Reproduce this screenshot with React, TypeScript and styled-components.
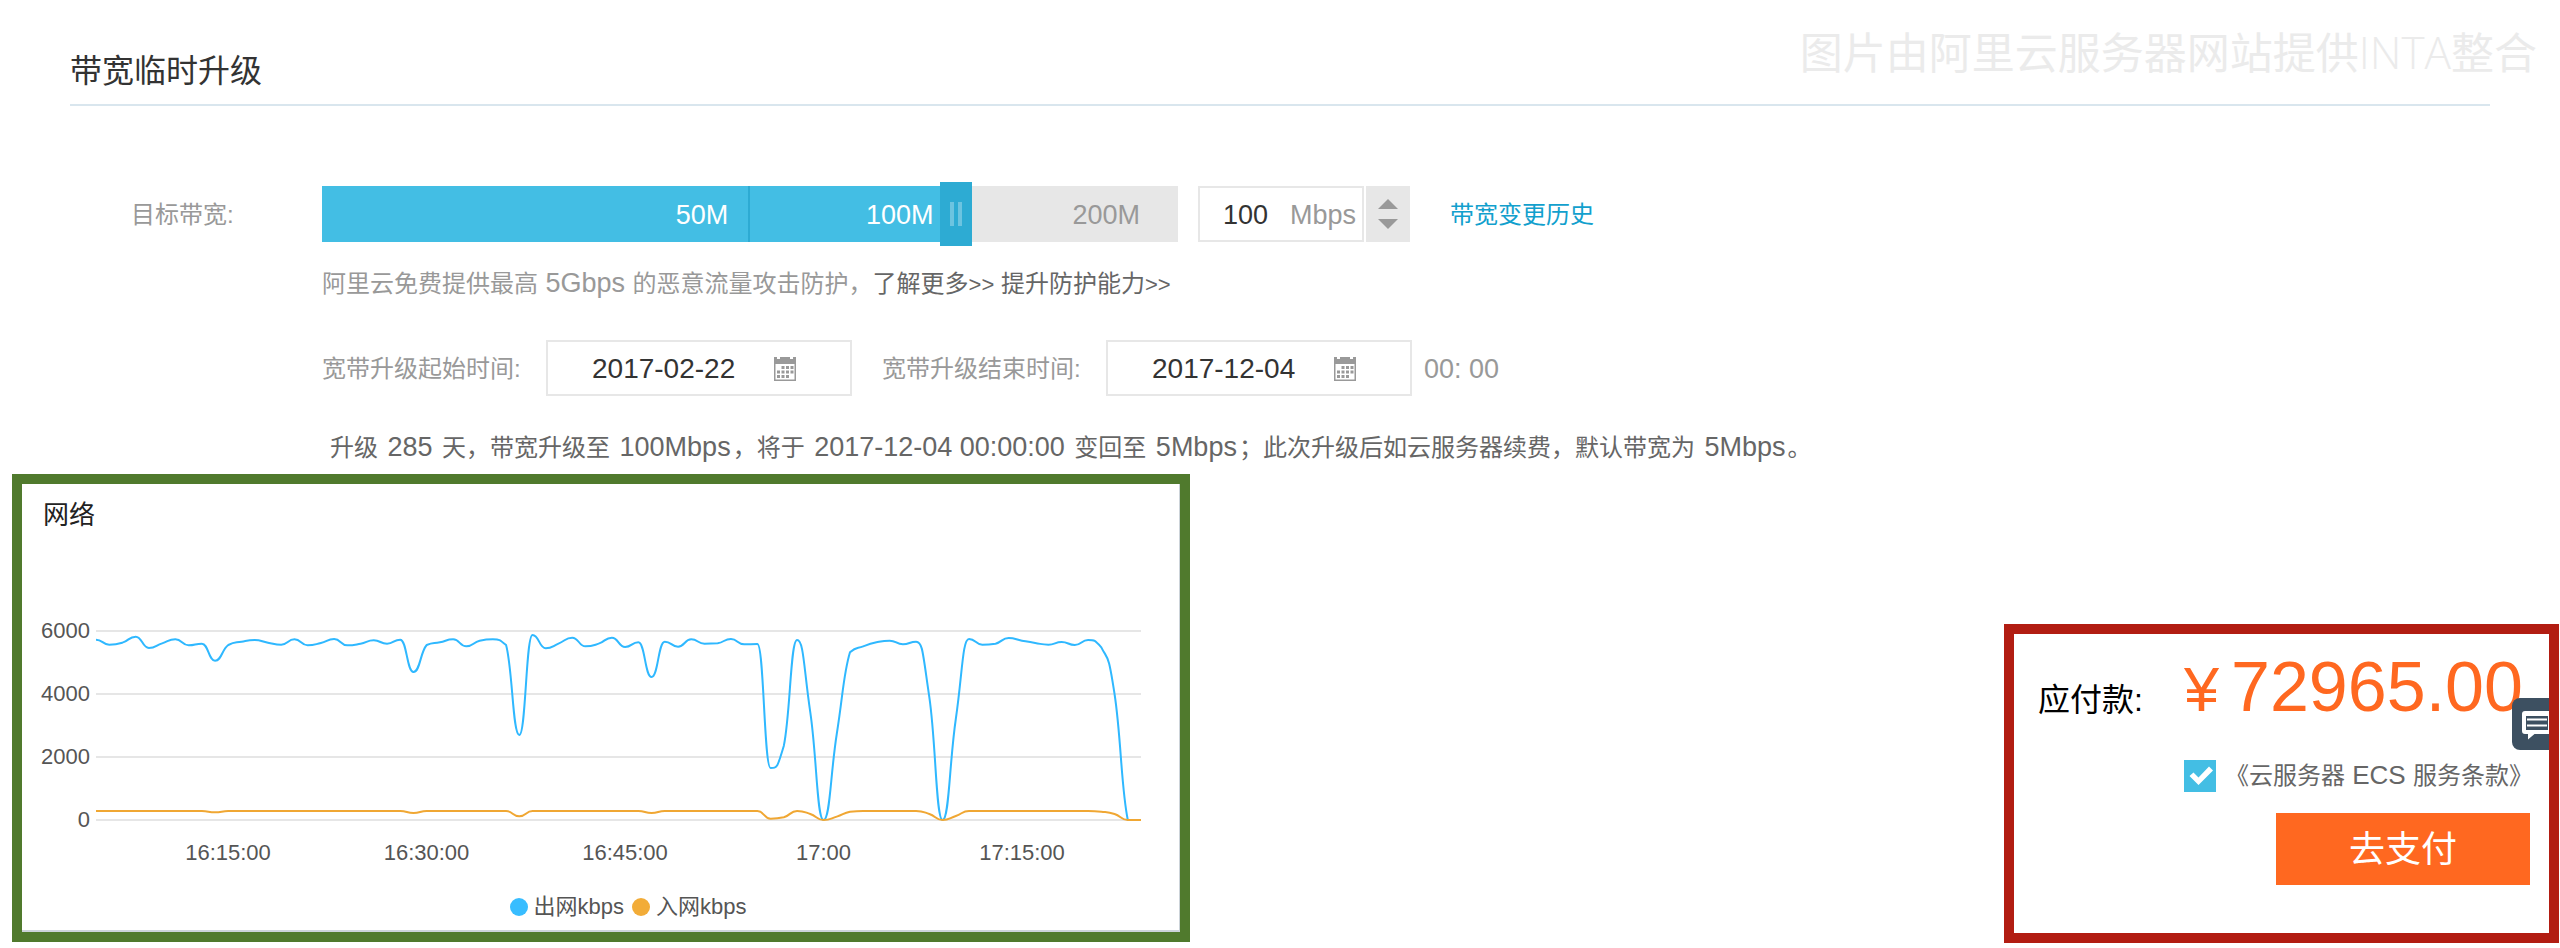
import React, { useState } from "react";
import styled, { createGlobalStyle } from "styled-components";

const Global = createGlobalStyle`
  *, *::before, *::after { box-sizing: border-box; }
  body {
    margin: 0;
    background: #fff;
    color: #999;
    font: 24px/36px "Liberation Sans", "Noto Sans CJK SC", sans-serif;
  }
  button, input { font: inherit; }
`;

const Page = styled.div`
  position: relative;
  padding-bottom: 6px;
`;

const Watermark = styled.div`
  position: absolute;
  top: 18px;
  right: 23px;
  color: #ebebeb;
  font-family: "Noto Sans CJK SC", sans-serif;
  font-size: 43px;
  line-height: 64px;
  white-space: nowrap;
  pointer-events: none;
`;

const WatermarkLatin = styled.span`
  font-family: "Open Sans", sans-serif;
  font-size: 44px;
  font-weight: 300;
  line-height: 1;
`;

const Header = styled.header`
  margin: 0 70px;
  padding: 47px 0 9px;
  border-bottom: 2px solid #d9e6ee;
`;

const Title = styled.h1`
  margin: 0;
  color: #333;
  font-size: 32px;
  font-weight: 400;
  line-height: 48px;
`;

const Form = styled.form`
  display: grid;
  grid-template-columns: 191px 1fr;
  padding: 80px 70px 0 131px;
  line-height: 58px;
`;

const FieldLabel = styled.label`
  white-space: nowrap;
`;

const Fields = styled.div`
  display: flex;
  flex-direction: column;
`;

const Row = styled.div`
  display: flex;
  align-items: center;
  height: 56px;
`;

const DateRow = styled(Row)`
  margin-top: 38px;
`;

const Latin = styled.span<{ $space?: number; $size?: number }>`
  font-size: ${(p) => p.$size ?? 27}px;
  line-height: 1;
  margin: 0 ${(p) => p.$space ?? 0}px;
`;

const Slider = styled.div`
  position: relative;
  display: flex;
  flex: 0 1 856px;
  height: 56px;
  margin-right: 20px;
`;

const Segment = styled.span<{ $share: number; $pad: number; $filled?: boolean; $divided?: boolean }>`
  flex: 0 0 ${(p) => p.$share}%;
  padding-right: ${(p) => p.$pad}px;
  border-left: ${(p) => (p.$divided ? "2px solid #2dabd3" : "0")};
  background: ${(p) => (p.$filled ? "#43bee4" : "#e7e7e7")};
  color: ${(p) => (p.$filled ? "#fff" : "#999")};
  font-size: 27px;
  text-align: right;
`;

const Handle = styled.span`
  position: absolute;
  top: -4px;
  left: 72.2%;
  display: flex;
  justify-content: center;
  align-items: center;
  gap: 4px;
  width: 32px;
  height: 64px;
  background: #2dabd3;

  &::before, &::after {
    content: "";
    width: 4px;
    height: 24px;
    background: #6cc4e0;
  }
`;

const Range = styled.input`
  position: absolute;
  inset: 0;
  width: 100%;
  height: 100%;
  margin: 0;
  opacity: 0;
  cursor: pointer;
`;

const AmountBox = styled.div`
  display: flex;
  align-items: center;
  width: 166px;
  height: 56px;
  padding: 2px 5px 0 23px;
  border: 2px solid #e7e7e7;
  font-size: 27px;
`;

const AmountInput = styled.input`
  width: 67px;
  padding: 0;
  border: 0;
  outline: 0;
  background: none;
  color: #333;
`;

const Stepper = styled.div`
  display: flex;
  flex-direction: column;
  width: 44px;
  height: 56px;
  margin: 0 40px 0 2px;
  background: #e7e7e7;
`;

const StepButton = styled.button<{ $down?: boolean }>`
  display: flex;
  flex: 1;
  justify-content: center;
  align-items: ${(p) => (p.$down ? "flex-start" : "flex-end")};
  padding: ${(p) => (p.$down ? "6px 0 0" : "0 0 4px")};
  border: 0;
  background: none;
`;

const HistoryLink = styled.a`
  padding-top: 2px;
  color: #12a0cd;
  text-decoration: none;
  white-space: nowrap;
`;

const Hint = styled.p`
  margin: 24px 0 0;
  line-height: 36px;

  a { color: #666; text-decoration: none; }
`;

const Arrows = styled.span`
  font-size: 22px;
  line-height: 1;
`;

const DateLabel = styled.label`
  flex: none;
  width: 224px;
  padding-top: 2px;
  white-space: nowrap;
`;

const DateBox = styled.div`
  display: flex;
  align-items: center;
  width: 306px;
  height: 56px;
  margin-right: 30px;
  padding: 0 52px 0 44px;
  border: 2px solid #e7e7e7;

  &:last-of-type { margin-right: 12px; }
`;

const DateInput = styled.input`
  width: 182px;
  padding: 2px 0 0;
  border: 0;
  outline: 0;
  background: none;
  color: #333;
  font-size: 28px;
  line-height: 36px;
`;

const IconButton = styled.button`
  display: flex;
  padding: 0;
  border: 0;
  background: none;
`;

const Time = styled.span`
  padding-top: 2px;
  font-size: 27px;
`;

const Summary = styled.p`
  margin: 34px 0 0;
  padding-left: 8px;
  color: #666;
  line-height: 36px;
`;

const Bottom = styled.div`
  display: flex;
  justify-content: space-between;
  align-items: flex-end;
  margin-top: 8px;
  padding: 0 1px 0 12px;
`;

const ChartPanel = styled.section`
  flex: 0 1 1178px;
  padding: 13px 0 7px;
  border: 10px solid #507a2d;
  box-shadow: inset -1px -2px 0 #ccd3d9;
`;

const ChartTitle = styled.h2`
  margin: 0 0 68px 21px;
  color: #222;
  font-size: 26px;
  font-weight: 400;
  line-height: 36px;
`;

const Plot = styled.svg`
  display: block;
  width: 100%;
  height: auto;
  fill: none;

  text { fill: #555; font-size: 22px; }
`;

const Legend = styled.ul`
  display: flex;
  justify-content: center;
  gap: 8px;
  margin: 18px 0 0;
  padding: 0 0 0 54px;
  list-style: none;
  color: #555;
  font-size: 22px;
  line-height: 36px;
`;

const LegendItem = styled.li<{ $color: string }>`
  display: flex;
  align-items: center;
  gap: 6px;

  &::before {
    content: "";
    width: 18px;
    height: 18px;
    border-radius: 50%;
    background: ${(p) => p.$color};
  }
`;

const PayPanel = styled.section`
  position: relative;
  flex: none;
  display: flex;
  flex-direction: column;
  align-items: flex-end;
  width: 555px;
  margin-bottom: -1px;
  padding: 13px 19px 48px 24px;
  border: 10px solid #b21d12;
`;

const PriceRow = styled.div`
  display: flex;
  align-self: stretch;
  align-items: baseline;
  color: #000;
  font-size: 32px;
  line-height: 80px;
`;

const PriceLabel = styled.span`
  width: 146px;
  white-space: nowrap;
`;

const Price = styled.strong`
  color: #ff6820;
  font-size: 70px;
  font-weight: 400;
  white-space: nowrap;
`;

const Currency = styled.span`
  display: inline-block;
  width: 47px;
  font-size: 63px;
  line-height: 1;
`;

const Terms = styled.div`
  display: flex;
  align-self: stretch;
  align-items: center;
  gap: 9px;
  margin-top: 18px;
  padding-left: 146px;
  color: #666;
  line-height: 36px;
  white-space: nowrap;

  a { color: inherit; text-decoration: none; }
`;

const TickBox = styled.span`
  position: relative;
  width: 32px;
  height: 32px;

  svg { position: absolute; inset: 0; pointer-events: none; }
`;

const Tick = styled.input`
  display: block;
  appearance: none;
  width: 32px;
  height: 32px;
  margin: 0;
  border: 2px solid #43bee4;

  &:checked { background: #43bee4; }
`;

const PayButton = styled.button`
  width: 254px;
  height: 72px;
  margin-top: 19px;
  padding: 2px 0 0;
  border: 0;
  background: #ff6820;
  color: #fff;
  font-size: 36px;
`;

const ChatButton = styled.button`
  position: absolute;
  top: 64px;
  right: 0;
  width: 37px;
  height: 52px;
  padding: 0;
  border: 0;
  border-radius: 8px 0 0 8px;
  background: #3d5061;
  overflow: hidden;

  svg { display: block; }
`;

/* Latin letters and digits are set a little larger than the Chinese text. */
function mixed(text: string, space?: number, size?: number) {
  return text
    .split(/( ?[A-Za-z0-9][A-Za-z0-9:\- ]*)/)
    .map((part, i) => (i % 2 ? <Latin key={i} $space={space} $size={size}>{part}</Latin> : part));
}

const CalendarIcon = () => (
  <svg width="22" height="25" viewBox="0 0 22 25" fill="#999" aria-hidden="true">
    <path fillRule="evenodd" d="M0 1h3v2h3V1h10v2h3V1h3v24H0zM1.5 8v15.5h19V8z" />
    <path d="M7.5 10h3v3h-3zM12 10h3v3h-3zM16.500 10h3v3h-3zM3 14.500h3v3H3zM7.500 14.500h3v3h-3zM12 14.500h3v3h-3zM16.500 14.500h3v3h-3zM3 19h3v3H3zM7.500 19h3v3h-3zM12 19h3v3h-3z" />
  </svg>
);

const outbound = [
  5725, 5566, 5630, 5820, 5460, 5608, 5735, 5545, 5598, 5058, 5556, 5661, 5714, 5630, 5566, 5735,
  5545, 5619, 5746, 5545, 5598, 5704, 5598, 5725, 4698, 5556, 5640, 5735, 5513, 5693, 5735, 5556,
  2698, 5873, 5450, 5608, 5788, 5513, 5598, 5788, 5492, 5640, 4540, 5661, 5503, 5735, 5598, 5608,
  5746, 5577, 5587, 1651, 2360, 5714, 3418, 0, 2730, 5323, 5513, 5640, 5693, 5577, 5661, 3894, 0,
  3206, 5746, 5566, 5598, 5778, 5693, 5619, 5566, 5651, 5556, 5714, 5482, 4000, 10, 0,
];

const inboundDips: Record<number, number> = {
  9: 243, 24: 222, 32: 116, 42: 222, 51: 42, 52: 85, 54: 190, 55: 0, 56: 106, 57: 265, 63: 190,
  64: 0, 65: 127, 76: 265, 77: 190, 78: 0, 79: 0,
};
const inbound = outbound.map((_, i) => inboundDips[i] ?? 285);

const PLOT = { left: 74, right: 1119, top: 30, bottom: 219 };

/* Smooth curve whose control points stay inside the range of each segment. */
function curve(values: number[]) {
  const step = (PLOT.right - PLOT.left) / (values.length - 1);
  const pts = values.map((v, i) => [
    PLOT.left + i * step,
    PLOT.bottom - (v / 6000) * (PLOT.bottom - PLOT.top),
  ]);
  const n = pts.length;
  const slope = pts.map((p, i) => {
    if (i === 0 || i === n - 1) return 0;
    const a = pts[i - 1][1];
    const b = pts[i + 1][1];
    return (p[1] - a) * (b - p[1]) <= 0 ? 0 : (b - a) / (2 * step);
  });
  const clamp = (v: number, a: number, b: number) =>
    Math.max(Math.min(a, b), Math.min(Math.max(a, b), v));
  let d = `M${pts[0][0]} ${pts[0][1]}`;
  for (let i = 0; i < n - 1; i++) {
    const [x0, y0] = pts[i];
    const [x1, y1] = pts[i + 1];
    const reach = step * 0.5;
    const c0 = clamp(y0 + slope[i] * reach, y0, y1);
    const c1 = clamp(y1 - slope[i + 1] * reach, y0, y1);
    d += `C${x0 + reach} ${c0} ${x1 - reach} ${c1} ${x1} ${y1}`;
  }
  return d;
}

const yTicks = [6000, 4000, 2000, 0];
const xTicks = ["16:15:00", "16:30:00", "16:45:00", "17:00", "17:15:00"];

function NetworkChart() {
  return (
    <Plot viewBox="0 0 1158 270" role="img" aria-label="网络">
      {yTicks.map((v, i) => (
        <g key={v}>
          <path d={`M${PLOT.left} ${PLOT.top + i * 63}H${PLOT.right}`} stroke="#dedede" strokeWidth="1.500" />
          <text x="68" y={37 + i * 63} textAnchor="end">{v}</text>
        </g>
      ))}
      {xTicks.map((t, i) => (
        <text key={t} x={206 + i * 198.500} y="259" textAnchor="middle">{t}</text>
      ))}
      <path d={curve(outbound)} stroke="#2fb8ff" strokeWidth="2" />
      <path d={curve(inbound)} stroke="#f0a733" strokeWidth="2" />
    </Plot>
  );
}

export default function App() {
  const [amount, setAmount] = useState("100");
  const [start, setStart] = useState("2017-02-22");
  const [end, setEnd] = useState("2017-12-04");
  const bump = (by: number) => setAmount(String(Math.min(200, Math.max(0, Number(amount) + by))));

  return (
    <Page>
      <Global />
      <Header>
        <Title>带宽临时升级</Title>
      </Header>
      <Watermark>
        图片由阿里云服务器网站提供<WatermarkLatin>INTA</WatermarkLatin>整合
      </Watermark>

      <Form onSubmit={(e) => e.preventDefault()}>
        <FieldLabel htmlFor="bandwidth">目标带宽:</FieldLabel>
        <Fields>
          <Row>
            <Slider>
              <Segment $share={49.8} $pad={20} $filled>50M</Segment>
              <Segment $share={24.2} $pad={22} $filled $divided>100M</Segment>
              <Segment $share={26} $pad={38}>200M</Segment>
              <Handle />
              <Range
                type="range"
                min="0"
                max="200"
                aria-label="目标带宽"
                value={Number(amount) || 0}
                onChange={(e) => setAmount(e.target.value)}
              />
            </Slider>
            <AmountBox>
              <AmountInput id="bandwidth" value={amount} onChange={(e) => setAmount(e.target.value)} />
              Mbps
            </AmountBox>
            <Stepper>
              <StepButton type="button" aria-label="增加" onClick={() => bump(1)}>
                <svg width="20" height="10" fill="#999"><path d="M10 0L20 10H0z" /></svg>
              </StepButton>
              <StepButton type="button" aria-label="减少" $down onClick={() => bump(-1)}>
                <svg width="20" height="10" fill="#999"><path d="M0 0H20L10 10z" /></svg>
              </StepButton>
            </Stepper>
            <HistoryLink href="#history">带宽变更历史</HistoryLink>
          </Row>

          <Hint>
            {mixed("阿里云免费提供最高 5Gbps 的恶意流量攻击防护，")}
            <a href="#more">了解更多<Arrows>&gt;&gt;</Arrows></a>{" "}
            <a href="#protect">提升防护能力<Arrows>&gt;&gt;</Arrows></a>
          </Hint>

          <DateRow>
            <DateLabel htmlFor="start">宽带升级起始时间:</DateLabel>
            <DateBox>
              <DateInput id="start" value={start} onChange={(e) => setStart(e.target.value)} />
              <IconButton type="button" aria-label="选择起始日期"><CalendarIcon /></IconButton>
            </DateBox>
            <DateLabel htmlFor="end">宽带升级结束时间:</DateLabel>
            <DateBox>
              <DateInput id="end" value={end} onChange={(e) => setEnd(e.target.value)} />
              <IconButton type="button" aria-label="选择结束日期"><CalendarIcon /></IconButton>
            </DateBox>
            <Time>00: 00</Time>
          </DateRow>

          <Summary>
            {mixed(
              "升级 285 天，带宽升级至 100Mbps，将于 2017-12-04 00:00:00 变回至 5Mbps；此次升级后如云服务器续费，默认带宽为 5Mbps。",
              2
            )}
          </Summary>
        </Fields>
      </Form>

      <Bottom>
        <ChartPanel>
          <ChartTitle>网络</ChartTitle>
          <NetworkChart />
          <Legend>
            <LegendItem $color="#38bdff">出网kbps</LegendItem>
            <LegendItem $color="#f2ac38">入网kbps</LegendItem>
          </Legend>
        </ChartPanel>

        <PayPanel>
          <PriceRow>
            <PriceLabel>应付款:</PriceLabel>
            <Price><Currency>¥</Currency>72965.00</Price>
          </PriceRow>
          <Terms>
            <TickBox>
              <Tick id="terms" type="checkbox" defaultChecked aria-label="同意服务条款" />
              <svg width="32" height="32" fill="#fff" aria-hidden="true">
                <path d="M5.500 16L9.500 12.500L14.500 17.500L25 6.500L29 10.500L14.500 25z" />
              </svg>
            </TickBox>
            <a href="#terms-text">{mixed("《云服务器 ECS 服务条款》", 0, 26)}</a>
          </Terms>
          <PayButton type="button">去支付</PayButton>
          <ChatButton type="button" aria-label="在线咨询">
            <svg width="48" height="52" aria-hidden="true">
              <path fill="#fff" fillRule="evenodd" d="M13 13H39V36H22.500L16 41.500V36H13a3 3 0 0 1-3-3V16a3 3 0 0 1 3-3zM14 18V32H36V18z" />
              <path d="M15 21.500H35M15 27.500H35" stroke="#fff" strokeWidth="2" />
            </svg>
          </ChatButton>
        </PayPanel>
      </Bottom>
    </Page>
  );
}
